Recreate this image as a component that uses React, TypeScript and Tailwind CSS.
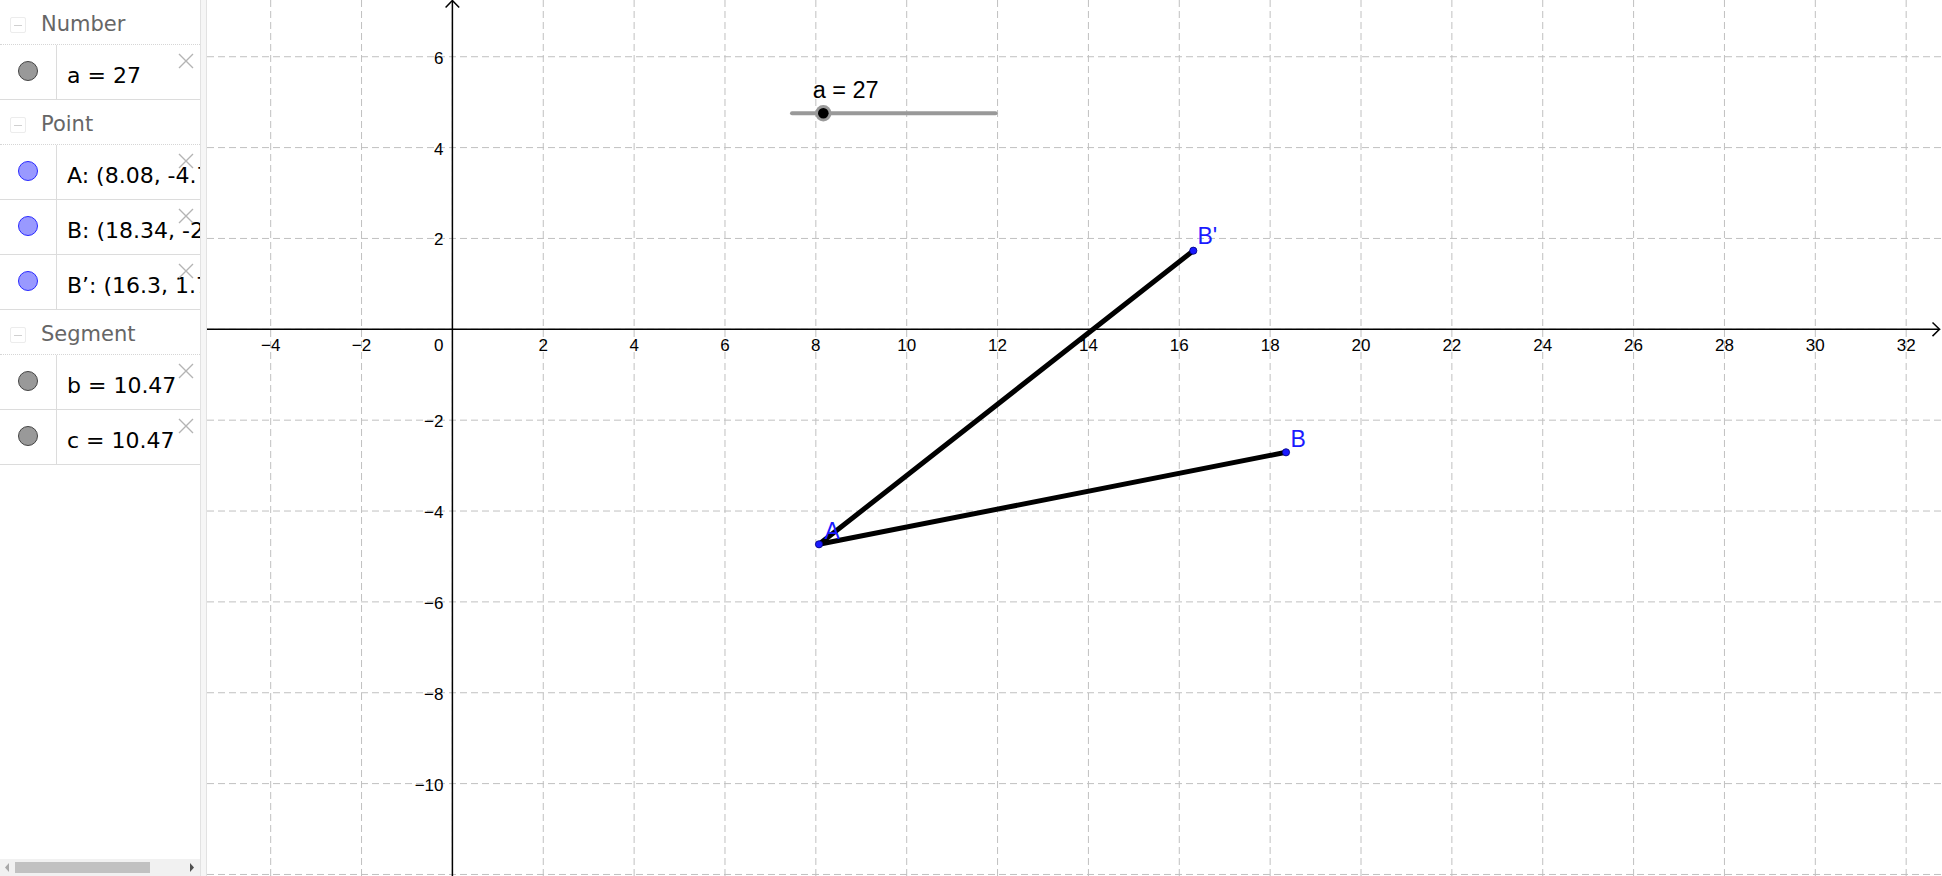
import React from 'react';

// graphics view: page pixels per unit and origin
const OX = 452.4;
const OY = 329.3;
const U = 45.43;
const px = (x: number) => OX + x * U;
const py = (y: number) => OY - y * U;

const MINUS = '\u2212';
const fmt = (n: number) => (n < 0 ? `${MINUS}${Math.abs(n)}` : String(n));

type Item = { kind: 'num' | 'point'; text: string };
type Group = { title: string; items: Item[] };

const groups: Group[] = [
  { title: 'Number', items: [{ kind: 'num', text: 'a = 27' }] },
  {
    title: 'Point',
    items: [
      { kind: 'point', text: 'A: (8.08, -4.78)' },
      { kind: 'point', text: 'B: (18.34, -2.69)' },
      { kind: 'point', text: 'B\u2019: (16.3, 1.74)' },
    ],
  },
  {
    title: 'Segment',
    items: [
      { kind: 'num', text: 'b = 10.47' },
      { kind: 'num', text: 'c = 10.47' },
    ],
  },
];

function GroupHeader({ title }: { title: string }) {
  return (
    <div className="relative h-[45px] shrink-0 border-b border-dotted border-[#d6d6d6]">
      <div className="absolute left-[10px] top-[17px] flex h-[16px] w-[16px] items-center justify-center rounded-[2px] border border-[#ececec]">
        <div className="h-[1px] w-[8px] bg-[#d0d0d0]" />
      </div>
      <div className="pl-[41px] pt-[12px] font-['DejaVu_Sans',sans-serif] text-[21px] leading-[24px] text-[#666666]">
        {title}
      </div>
    </div>
  );
}

function ItemRow({ item }: { item: Item }) {
  const dot =
    item.kind === 'point'
      ? 'bg-[#9999ff] border-[#2a2aff]'
      : 'bg-[#999999] border-[#444444]';
  return (
    <div className="relative flex h-[55px] shrink-0 border-b border-[#dcdcdc]">
      <div className="flex w-[57px] shrink-0 justify-center border-r border-[#dcdcdc] pt-[16px]">
        <div className={`h-[20px] w-[20px] rounded-full border ${dot}`} />
      </div>
      <div className="overflow-hidden whitespace-nowrap pl-[10px] pt-[18px] font-['DejaVu_Sans',sans-serif] text-[22px] leading-[26px] text-black">
        {item.text}
      </div>
      <svg className="absolute left-[178px] top-[8px]" width="16" height="16" viewBox="0 0 16 16">
        <path d="M1 1 L15 15 M15 1 L1 15" stroke="#b4b4b4" strokeWidth="1.4" fill="none" />
      </svg>
    </div>
  );
}

function AlgebraPanel() {
  return (
    <div className="flex h-full w-[200px] shrink-0 flex-col overflow-hidden bg-white">
      <div className="flex flex-1 flex-col">
        {groups.map((g) => (
          <React.Fragment key={g.title}>
            <GroupHeader title={g.title} />
            {g.items.map((it) => (
              <ItemRow key={it.text} item={it} />
            ))}
          </React.Fragment>
        ))}
      </div>
      <div className="flex h-[17px] shrink-0 items-center bg-[#f1f1f1]">
        <svg width="15" height="17" viewBox="0 0 15 17">
          <path d="M9 4 L5 8.5 L9 13 Z" fill="#a8a8a8" />
        </svg>
        <div className="h-[11px] w-[135px] bg-[#c1c1c1]" />
        <div className="flex-1" />
        <svg width="15" height="17" viewBox="0 0 15 17">
          <path d="M5 4 L9 8.5 L5 13 Z" fill="#505050" />
        </svg>
      </div>
    </div>
  );
}

function Graphics() {
  const vx: number[] = [];
  for (let k = -2; k <= 16; k++) vx.push(k * 2);
  const hy: number[] = [];
  for (let k = 3; k >= -6; k--) hy.push(k * 2);

  const A = { x: 819, y: 544.3 };
  const B = { x: 1286, y: 452.3 };
  const Bp = { x: 1193.3, y: 250.7 };

  return (
    <div className="relative h-full flex-1 overflow-hidden bg-white">
      <svg className="absolute inset-0" width="1735" height="876" viewBox="207 0 1735 876">
        <g stroke="#c0c0c0" strokeWidth="1" strokeDasharray="7 4">
          {vx.map((x) => (
            <line key={`v${x}`} x1={px(x)} y1={0} x2={px(x)} y2={876} />
          ))}
          {hy.map((y) => (
            <line key={`h${y}`} x1={207} y1={py(y)} x2={1942} y2={py(y)} />
          ))}
        </g>

        <g stroke="#000" strokeWidth="1.5" fill="none">
          <line x1={207} y1={OY} x2={1939} y2={OY} />
          <path d={`M1932.5 ${OY - 6.8} L1939.5 ${OY} L1932.5 ${OY + 6.8}`} />
          <line x1={OX} y1={876} x2={OX} y2={1} />
          <path d={`M${OX - 6.8} 7.5 L${OX} 0.5 L${OX + 6.8} 7.5`} />
        </g>

        <g fontFamily="'Liberation Sans', Arial, sans-serif" fontSize="17" fill="#000">
          {vx
            .filter((x) => x !== 0)
            .map((x) => (
              <text key={`lx${x}`} x={px(x)} y={350.5} textAnchor="middle">
                {fmt(x)}
              </text>
            ))}
          <text x={443.5} y={350.5} textAnchor="end">
            0
          </text>
          {hy
            .filter((y) => y !== 0 && y > -12)
            .map((y) => (
              <text key={`ly${y}`} x={443.5} y={py(y) + 7} textAnchor="end">
                {fmt(y)}
              </text>
            ))}
        </g>

        {/* slider a */}
        <line x1={792} y1={113.3} x2={995.5} y2={113.3} stroke="#999999" strokeWidth="4" strokeLinecap="round" />
        <circle cx={823.3} cy={113.3} r={8.2} fill="#9a9a9a" />
        <circle cx={823.3} cy={113.3} r={5.3} fill="#000" />
        <text x={812.7} y={98} fontFamily="'Liberation Sans', Arial, sans-serif" fontSize="23.5" fill="#000">
          a = 27
        </text>

        {/* segments */}
        <g stroke="#000" strokeWidth="5" strokeLinecap="round">
          <line x1={A.x} y1={A.y} x2={B.x} y2={B.y} />
          <line x1={A.x} y1={A.y} x2={Bp.x} y2={Bp.y} />
        </g>

        {/* points */}
        <g fill="#1a1aff" stroke="#00007a" strokeWidth="0.8">
          <circle cx={A.x} cy={A.y} r={3.6} />
          <circle cx={B.x} cy={B.y} r={3.6} />
          <circle cx={Bp.x} cy={Bp.y} r={3.6} />
        </g>
        <g fontFamily="'Liberation Sans', Arial, sans-serif" fontSize="23" fill="#1a1aff">
          <text x={824.5} y={539}>A</text>
          <text x={1290.5} y={446.7}>B</text>
          <text x={1197.5} y={244.3}>B'</text>
        </g>
      </svg>
    </div>
  );
}

export default function App() {
  return (
    <div className="flex h-[876px] w-[1942px] overflow-hidden bg-white">
      <AlgebraPanel />
      <div className="h-full w-[7px] shrink-0 border-x border-[#e2e2e2] bg-[#f6f6f6]" />
      <Graphics />
    </div>
  );
}
